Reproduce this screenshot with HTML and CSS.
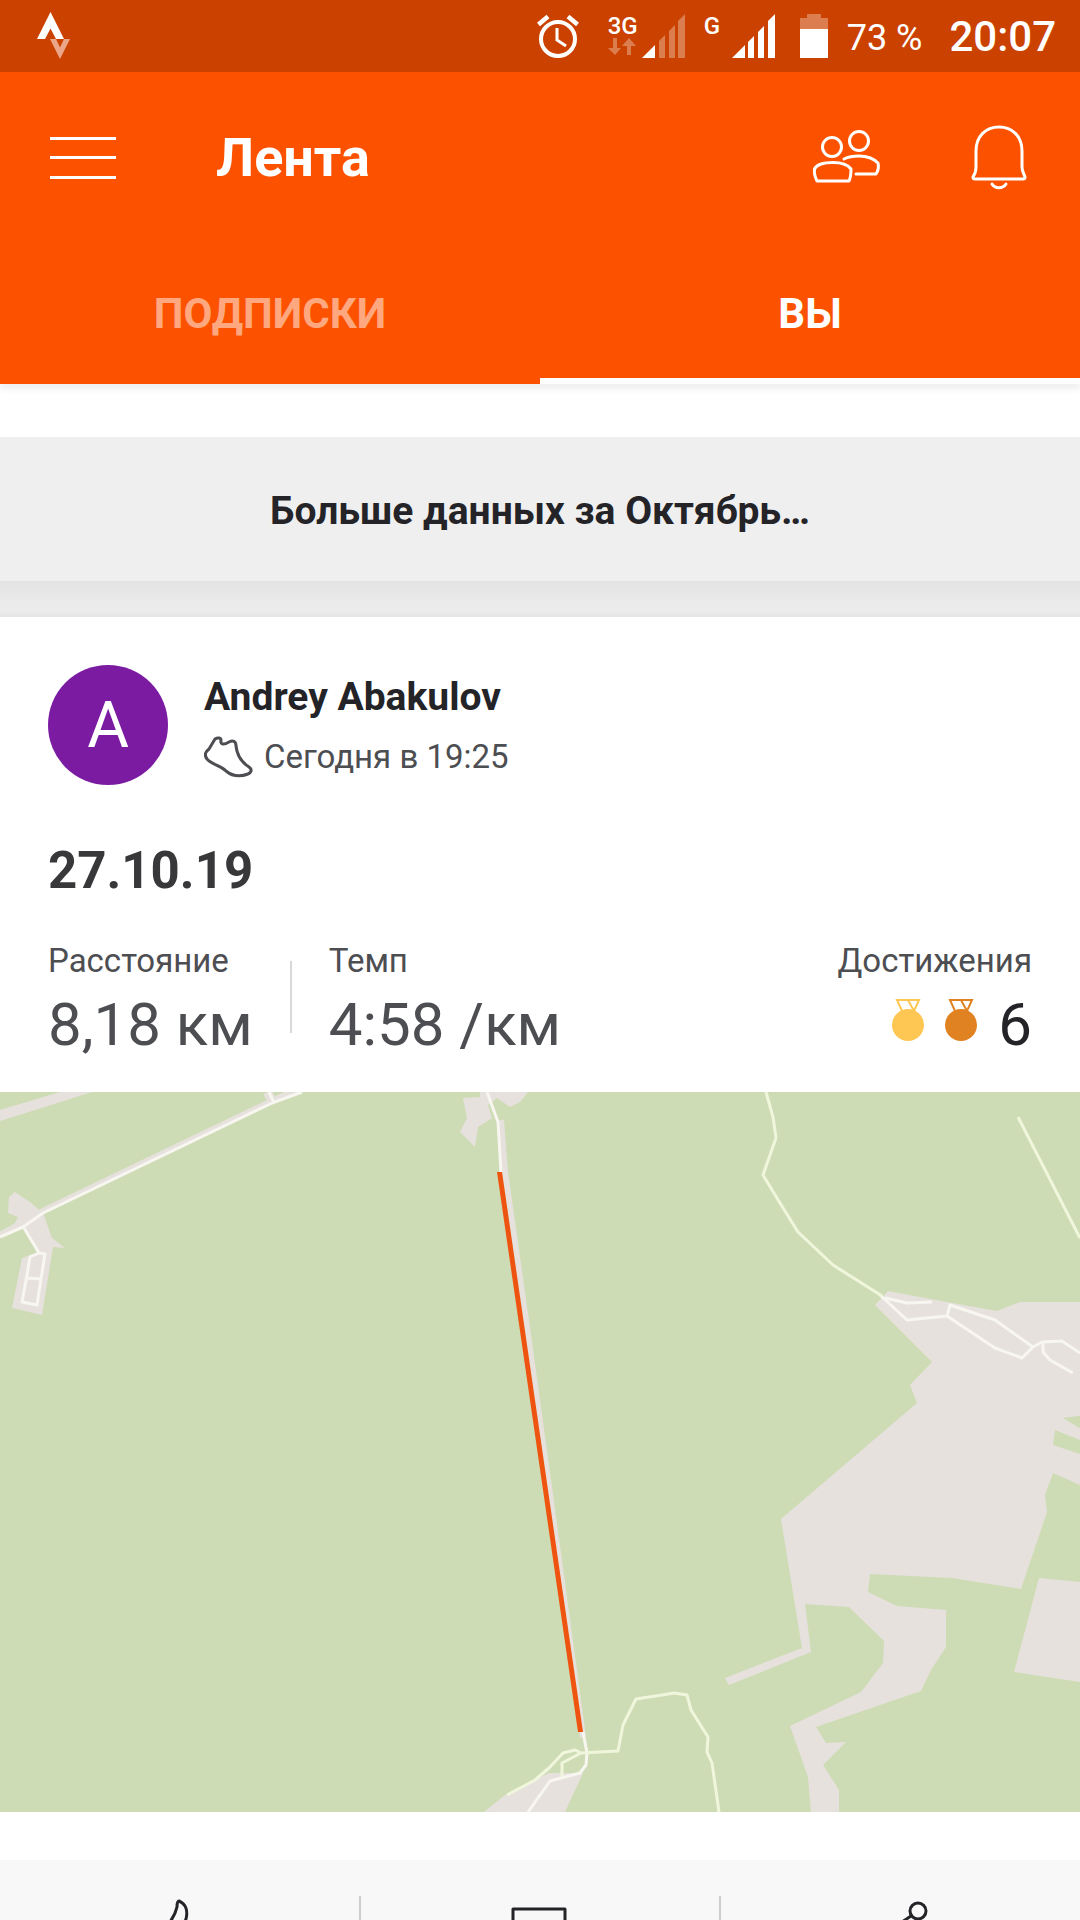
FILE: index.html
```html
<!DOCTYPE html>
<html lang="ru">
<head>
  <meta charset="UTF-8">
  <meta name="viewport" content="width=device-width, initial-scale=1.0">
  <title>Лента</title>
  <link rel="stylesheet" href="styles.css">
</head>
<body>

  <div class="app">

    <div class="status-bar">
      <svg class="status-logo" width="34" height="48" viewBox="0 0 34 48">
        <path d="M13.500 0L27 27H19L13.500 16.500L8 27H0Z" fill="#fff"/>
        <path d="M13 27H19L23 35.500L27 27H33L23 47Z" fill="#eba68a"/>
      </svg>
      <div class="status-icons">
        <svg class="alarm" width="42" height="44" viewBox="0 0 42 44" fill="none" stroke="#fff">
          <circle cx="21" cy="25" r="17" stroke-width="4"/>
          <path d="M20 14V26L29 32" stroke-width="3"/>
          <path d="M1.500 10.500L11 2.500M40.500 10.500L31 2.500" stroke-width="4.500"/>
        </svg>
        <div class="network">
          <span>3G</span>
          <svg width="28" height="17" viewBox="0 0 28 17" fill="#dc7d4f">
            <path d="M5 0H9V10H13L7 17L0 10H5Z"/>
            <path d="M19 17H23V8H28L21 0L14 8H19Z"/>
          </svg>
        </div>
        <svg class="signal" width="44" height="44" viewBox="0 0 44 44">
          <path d="M0 44L13 31V44Z" fill="#fff"/>
          <path d="M17 44V27L23 21V44ZM27 44V17L33 11V44ZM36 44V7L43 0V44Z" fill="#dc7d4f"/>
        </svg>
        <div class="network second">
          <span>G</span>
        </div>
        <svg class="signal" width="44" height="44" viewBox="0 0 44 44" fill="#fff">
          <path d="M0 44L13 31V44ZM16 44V28L22 22V44ZM26 44V18L32 12V44ZM36 44V7L43 0V44Z"/>
        </svg>
        <svg class="battery" width="28" height="44" viewBox="0 0 28 44">
          <path d="M7 0H21V4H28V15H0V4H7Z" fill="#dc7d4f"/>
          <path d="M0 15H28V44H0Z" fill="#fff"/>
        </svg>
        <span class="percent">73 %</span>
        <span class="time">20:07</span>
      </div>
    </div>

    <header class="header">
      <div class="toolbar">
        <button class="icon-button" aria-label="Меню">
          <svg width="66" height="42" viewBox="0 0 66 42" fill="#fff">
            <path d="M0 0H66V3H0ZM0 19H66V22H0ZM0 39H66V42H0Z"/>
          </svg>
        </button>
        <h1>Лента</h1>
        <button class="icon-button friends" aria-label="Друзья">
          <svg width="76" height="64" viewBox="0 0 76 64" fill="none" stroke="#fff" stroke-width="3" stroke-linecap="round" stroke-linejoin="round">
            <circle cx="24" cy="21" r="9.500"/>
            <circle cx="51" cy="15" r="9.500"/>
            <path d="M9 55C7 51 6 47 6.500 43C9 38 16 36.500 25 36.500C34 36.500 40 39 43 43C43 47 43 51 41 55Z"/>
            <path d="M36 33C40 31 45 30 51 30C60 30 66 33 70 37C71 41 70 45 68 48H48"/>
          </svg>
        </button>
        <button class="icon-button" aria-label="Уведомления">
          <svg width="60" height="68" viewBox="0 0 60 68" fill="none" stroke="#fff" stroke-width="3" stroke-linecap="round" stroke-linejoin="round">
            <path d="M6 27C6 12 16 3 29 3C42 3 52 12 52 27V43C52 47 54 50 55 53Q55 55 53 55H5Q3 55 3 53C5 50 6 47 6 43Z"/>
            <path d="M22 60C25 65 33 65 36 60"/>
          </svg>
        </button>
      </div>
      <nav class="tabs">
        <a href="#following">ПОДПИСКИ</a>
        <a href="#you" class="active">ВЫ</a>
      </nav>
    </header>

    <main class="feed">
      <a class="more" href="#more">Больше данных за Октябрь…</a>

      <article class="activity">
        <div class="athlete">
          <div class="avatar">A</div>
          <div class="athlete-info">
            <h2>Andrey Abakulov</h2>
            <p class="when">
              <svg width="50" height="42" viewBox="0 0 50 42" fill="none" stroke="#4d4e52" stroke-width="3" stroke-linejoin="round">
                <path d="M11 3C14 1 17 2 17 4C16 9 20 9 25 6C29 4 32 5 32 10C33 19 37 26 45 31C48 33 48 36 44 38C36 41 28 40 22 35C16 29 8 29 3 23C0 19 1 16 5 13Z"/>
              </svg>
              Сегодня в 19:25
            </p>
          </div>
        </div>

        <h3>27.10.19</h3>

        <div class="stats">
          <div class="stat">
            <span class="label">Расстояние</span>
            <span class="value">8,18 км</span>
          </div>
          <div class="stat pace">
            <span class="label">Темп</span>
            <span class="value">4:58 /км</span>
          </div>
          <div class="stat achievements">
            <span class="label">Достижения</span>
            <span class="value">
              <svg width="32" height="42" viewBox="0 0 32 42" fill="#fec653" stroke="#fec653" stroke-width="2">
                <circle cx="16" cy="26" r="15"/>
                <path d="M5 1H27L22 12H10ZM16 1L22 12" fill="none"/>
              </svg>
              <svg width="32" height="42" viewBox="0 0 32 42" fill="#e18222" stroke="#e18222" stroke-width="2">
                <circle cx="16" cy="26" r="15"/>
                <path d="M5 1H27L22 12H10ZM16 1L22 12" fill="none"/>
              </svg>
              <span>6</span>
            </span>
          </div>
        </div>

        <svg class="map" viewBox="0 0 1080 720">
          <rect width="1080" height="720" fill="#cedcb5"/>

          <!-- Open ground -->
          <g fill="#e6e1dd">
            <path d="M0 18L60 0H92L0 29Z"/>
            <path d="M9 105L15 100L30 110L43 121L52 146L65 156L53 155L42 223L12 216L22 166L38 160L25 136L13 135L18 125L8 121Z"/>
            <path d="M463 6L480 5V0H528L520 10L510 15L497 6L488 13L492 26L478 35L475 55L460 40L467 26Z"/>
            <path d="M875 213L888 199L947 210L997 219L1020 210H1080V324L1063 326L1080 336V348L1055 338L1053 353L1080 362V393L1053 381L1045 403L1047 420L1021 497L952 486L870 482L868 500L897 514L946 518V555L931 578L921 599L816 635L826 651L846 650L823 673L839 698V720H811L808 685L790 634L861 600L883 571L884 549L849 515L805 512L811 560L729 593L725 586L802 556L781 427L917 311L910 293L932 270Z"/>
            <path d="M1063 326L1080 324V336Z" fill="#cedcb5"/>
            <path d="M1039 486L1080 490V590L1014 580Z"/>
            <path d="M583 681H549L531 690L505 703L484 720H565Z"/>
          </g>
          <g fill="none" stroke="#e6e1dd" stroke-width="6">
            <path d="M0 143L43 119L272 9L298 -3"/>
            <path d="M501 28L505 80L528 243L548 388L583 645"/>
            <path d="M267 0L274 11" stroke-width="9"/>
          </g>

          <!-- Roads -->
          <g fill="none" stroke="#f8f6f0" stroke-width="3" stroke-linejoin="round">
            <path d="M0 145L23 135L43 121L272 11L302 0"/>
            <path d="M269 0L274 11"/>
            <path d="M24 136L39 161L45 162L40 193L37 213L22 210L27 183L30 165L39 161M27 186L41 187"/>
            <path d="M487 0L498 30L501 80"/>
            <path d="M583 640L587 661L586 673L580 681L550 689L528 720"/>
            <path d="M880 203L907 228L947 224L995 256L1022 266L1033 255L995 228L950 213L947 224M885 206L907 211L932 210"/>
            <path d="M1033 255L1042 250L1062 249L1080 261M1043 250V260L1050 268L1073 281"/>
          </g>

          <!-- Forest paths -->
          <g fill="none" stroke="#f0f6dc" stroke-width="3" stroke-linejoin="round">
            <path d="M766 0L773 25L776 46L763 83L780 111L798 140L833 173L882 204"/>
            <path d="M1018 25L1080 146"/>
            <path d="M507 703L535 688L549 676L563 661L575 658L581 661L618 659L623 633L636 607L662 603L674 601L687 603L691 618L708 645L707 660L712 671L719 720"/>
            <path d="M581 661L562 671V685"/>
          </g>

          <!-- Route -->
          <path d="M497 80H502L583 640H578Z" fill="#ee540f"/>
        </svg>

        <div class="actions">
          <button aria-label="Нравится">
            <svg width="72" height="72" viewBox="0 0 72 72" fill="none" stroke="#242428" stroke-width="3" stroke-linejoin="round">
              <path d="M8 34H20C28 26 32 20 34 11Q34 5 36 5C43 8 45 15 43 23L40 30H58Q63 31 61 37L54 60Q53 63 48 63H8Z"/>
            </svg>
          </button>
          <button aria-label="Комментировать">
            <svg width="72" height="72" viewBox="0 0 72 72" fill="none" stroke="#242428" stroke-width="3" stroke-linejoin="round">
              <path d="M9 13H61V54H34L22 66V54H9Z"/>
            </svg>
          </button>
          <button aria-label="Поделиться">
            <svg width="72" height="72" viewBox="0 0 72 72" fill="none" stroke="#242428" stroke-width="3">
              <circle cx="53" cy="15" r="8"/>
              <circle cx="18" cy="38" r="8"/>
              <circle cx="53" cy="60" r="8"/>
              <path d="M46 20L25 34M25 42L46 56"/>
            </svg>
          </button>
        </div>
      </article>
    </main>

  </div>

</body>
</html>
```
FILE: styles.css
```css
* {
  box-sizing: border-box;
}

body {
  margin: 0;
  font-family: Roboto, Arial, sans-serif;
  color: #242428;
  background-color: #fff;
}

h1, h2, h3, p {
  margin: 0;
}

a {
  text-decoration: none;
}

button {
  padding: 0;
  border: none;
  background: none;
  cursor: pointer;
}

svg {
  display: block;
  flex-shrink: 0;
}

.app {
  display: flex;
  flex-direction: column;
  height: 100vh;
  overflow: hidden;
}

/* Status bar */
.status-bar {
  display: flex;
  flex-shrink: 0;
  justify-content: space-between;
  align-items: center;
  height: 72px;
  padding: 0 24px 0 37px;
  background-color: #cb4200;
  color: #fff;
}

.status-icons {
  display: flex;
  align-items: center;
}

.network {
  width: 28px;
  height: 44px;
  margin-left: 29px;
  font-size: 24px;
  font-weight: 500;
  line-height: 24px;
}

.network.second {
  width: 16px;
  margin-left: 18px;
}

.signal {
  margin-left: 6px;
}

.network.second + .signal {
  margin-left: 12px;
}

.battery {
  margin-left: 24px;
}

.percent {
  margin-left: 19px;
  font-size: 36px;
  line-height: 44px;
  padding-top: 3px;
}

.time {
  margin-left: 27px;
  font-size: 42px;
  font-weight: 500;
  line-height: 44px;
  padding-top: 2px;
}

/* Header */
.header {
  position: relative;
  flex-shrink: 0;
  background-color: #fc5200;
  box-shadow: 0 6px 6px rgba(0, 0, 0, 0.06);
}

.toolbar {
  display: flex;
  align-items: center;
  height: 168px;
  padding: 3px 50px 0;
}

.toolbar h1 {
  flex: 1;
  margin-left: 100px;
  color: #fff;
  font-size: 54px;
  font-weight: 700;
}

.friends {
  margin-right: 86px;
}

.tabs {
  display: flex;
  height: 144px;
}

.tabs a {
  flex: 1;
  border-bottom: 6px solid transparent;
  color: #ffa77f;
  font-size: 42px;
  font-weight: 700;
  line-height: 148px;
  text-align: center;
}

.tabs a.active {
  border-bottom-color: #fff;
  color: #fff;
}

/* Feed */
.feed {
  flex: 1;
  min-height: 0;
  overflow: hidden;
  padding-top: 53px;
}

.more {
  display: block;
  height: 144px;
  background-color: #efefef;
  color: #242428;
  font-size: 39px;
  font-weight: 700;
  line-height: 148px;
  text-align: center;
}

/* Shaded gap above the card */
.activity::before {
  content: "";
  display: block;
  height: 36px;
  background: linear-gradient(#e3e3e3, #ebebeb 60%, #ebebeb 85%, #e4e4e4);
}

.athlete {
  display: flex;
  align-items: center;
  gap: 36px;
  height: 168px;
  padding: 48px 48px 0;
}

.athlete-info {
  padding-top: 4px;
}

.avatar {
  width: 120px;
  height: 120px;
  border-radius: 50%;
  background-color: #7b1ba2;
  color: #fff;
  font-size: 64px;
  line-height: 122px;
  text-align: center;
}

.athlete h2 {
  font-size: 39px;
  font-weight: 700;
  line-height: 60px;
}

.when {
  display: flex;
  align-items: center;
  gap: 10px;
  color: #4d4e52;
  font-size: 33px;
  line-height: 60px;
}

.activity h3 {
  padding: 50px 48px 0;
  color: #38383a;
  font-size: 51px;
  font-weight: 700;
  line-height: 72px;
}

.stats {
  display: flex;
  align-items: center;
  padding: 30px 48px 28px;
}

.stat {
  display: flex;
  flex-direction: column;
  color: #4d4e52;
}

.label {
  font-size: 33px;
  line-height: 48px;
}

.value {
  font-size: 60px;
  line-height: 79px;
}

.pace {
  position: relative;
  margin-left: 76px;
}

/* Divider between the stats */
.pace::before {
  content: "";
  position: absolute;
  top: 24px;
  bottom: 31px;
  left: -39px;
  width: 2px;
  background-color: #d8d8d8;
}

.achievements {
  align-items: flex-end;
  margin-left: auto;
}

.achievements .value {
  display: flex;
  align-items: center;
  gap: 21px;
  color: #242428;
}

.achievements svg {
  margin-bottom: 10px;
}

.map {
  width: 100%;
  height: auto;
}

.actions {
  display: flex;
  margin-top: 48px;
  padding: 36px 0;
  background-color: #f8f8f8;
}

.actions button {
  display: flex;
  flex: 1;
  justify-content: center;
}

.actions button + button {
  border-left: 2px solid #cccccc;
}
```
